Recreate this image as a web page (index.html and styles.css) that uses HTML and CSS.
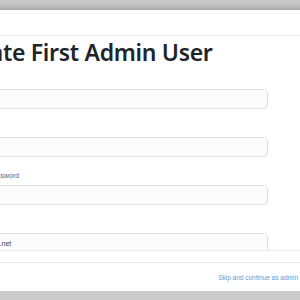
FILE: index.html
```html
<!DOCTYPE html>
<html lang="en">
<head>
  <meta charset="UTF-8" />
  <meta name="viewport" content="width=device-width, initial-scale=1.0" />
  <title>Create First Admin User</title>
  <link rel="stylesheet" href="styles.css">
</head>
<body>

  <div class="modal">
    <div class="modal-header"></div>

    <div class="modal-body">
      <h2 class="modal-title">Create First Admin User</h2>

      <form class="admin-form">
        <div class="field">
          <label for="username">Username</label>
          <input type="text" id="username">
        </div>
        <div class="field">
          <label for="password">Password</label>
          <input type="password" id="password">
        </div>
        <div class="field">
          <label for="confirm">Confirm Password</label>
          <input type="password" id="confirm">
        </div>
        <div class="field">
          <label for="email">Email</label>
          <input type="email" id="email" value="user@site.net">
        </div>
      </form>
    </div>

    <div class="modal-spacer"></div>

    <footer class="modal-footer">
      <a href="#" class="skip-link">Skip and continue as admin</a>
    </footer>
  </div>

</body>
</html>
```

FILE: styles.css
```css
:root {
  --backdrop: #cbcbcb;
  --text: #212529;
  --muted: #5f656b;
  --line: #e9ecef;
  --input-border: #dee2e6;
  --input-bg: #fbfbfc;
  --link: #5d9ad6;
}

* {
  margin: 0;
  padding: 0;
  box-sizing: border-box;
}

body {
  background-color: var(--backdrop);
  font-family: 'Liberation Sans', Arial, sans-serif;
  color: var(--text);
  overflow: hidden;
}

.modal {
  width: 364px;
  margin: 10px 0 0 -52px;
  background-color: #fff;
  box-shadow: 0 2px 10px rgba(0, 0, 0, 0.5);
}

.modal-header {
  height: 26px;
  border-bottom: 1px solid var(--line);
}

.modal-body {
  height: 215px;
  overflow: hidden;
  padding: 5px 0 0 14px;
  border-bottom: 1px solid var(--line);
}

.modal-title {
  margin-left: -9px;
  font-family: 'Noto Sans', 'Open Sans', sans-serif;
  font-size: 23px;
  font-weight: 600;
  line-height: 22px;
  letter-spacing: -0.3px;
}

.admin-form {
  width: 306px;
  margin-top: 12px;
  display: flex;
  flex-direction: column;
  gap: 14px;
}

.field label {
  display: block;
  font-size: 7px;
  line-height: 9px;
  color: var(--muted);
  margin-bottom: 5px;
}

.field input {
  display: block;
  width: 100%;
  height: 20px;
  padding: 0 5px;
  border: 1px solid var(--input-border);
  border-radius: 4px;
  background-color: var(--input-bg);
  font-family: inherit;
  font-size: 7px;
  color: #444;
}

.modal-spacer {
  height: 11px;
}

.modal-footer {
  display: flex;
  justify-content: flex-end;
  align-items: center;
  height: 29px;
  padding-right: 14px;
  border-top: 1px solid var(--line);
}

.skip-link {
  font-size: 6.5px;
  color: var(--link);
  text-decoration: none;
}
```
